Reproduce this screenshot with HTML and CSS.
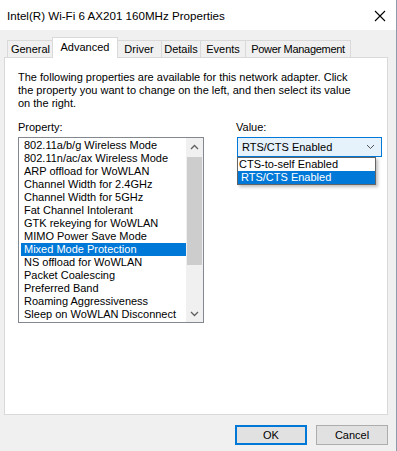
FILE: index.html
```html
<!doctype html>
<html lang="en">
<head>
    <meta charset="UTF-8">
    <title>Intel(R) Wi-Fi 6 AX201 160MHz Properties</title>
    <link rel="stylesheet" href="styles.css">
</head>
<body>
    <div class="window">
        <div class="titlebar">
            <span class="title">Intel(R) Wi-Fi 6 AX201 160MHz Properties</span>
            <svg class="close" width="12" height="12" viewBox="0 0 12 12">
                <path d="M1 1L11 11M11 1L1 11" stroke="#000" stroke-width="1.1" fill="none"/>
            </svg>
        </div>
        <div class="body">
            <div class="tabs">
                <div class="tab first">General</div>
                <div class="tab active">Advanced</div>
                <div class="tab driver">Driver</div>
                <div class="tab details">Details</div>
                <div class="tab events">Events</div>
                <div class="tab power">Power Management</div>
            </div>
            <div class="panel">
                <p class="desc">The following properties are available for this network adapter. Click<br>the property you want to change on the left, and then select its value<br>on the right.</p>
                <div class="columns">
                    <div class="prop-col">
                        <div class="label">Property:</div>
                        <div class="listbox">
                            <ul class="items">
                                <li>802.11a/b/g Wireless Mode</li>
                                <li>802.11n/ac/ax Wireless Mode</li>
                                <li>ARP offload for WoWLAN</li>
                                <li>Channel Width for 2.4GHz</li>
                                <li>Channel Width for 5GHz</li>
                                <li>Fat Channel Intolerant</li>
                                <li>GTK rekeying for WoWLAN</li>
                                <li>MIMO Power Save Mode</li>
                                <li class="selected">Mixed Mode Protection</li>
                                <li>NS offload for WoWLAN</li>
                                <li>Packet Coalescing</li>
                                <li>Preferred Band</li>
                                <li>Roaming Aggressiveness</li>
                                <li>Sleep on WoWLAN Disconnect</li>
                            </ul>
                            <div class="scrollbar">
                                <div class="arrow">
                                    <svg width="9" height="6" viewBox="0 0 9 6"><path d="M1 5L4.5 1.5L8 5" stroke="#606060" stroke-width="1.3" fill="none"/></svg>
                                </div>
                                <div class="track">
                                    <div class="thumb"></div>
                                </div>
                                <div class="arrow">
                                    <svg width="9" height="6" viewBox="0 0 9 6"><path d="M1 1L4.5 4.5L8 1" stroke="#606060" stroke-width="1.3" fill="none"/></svg>
                                </div>
                            </div>
                        </div>
                    </div>
                    <div class="value-col">
                        <div class="label">Value:</div>
                        <div class="combo">
                            <span>RTS/CTS Enabled</span>
                            <svg width="9" height="6" viewBox="0 0 9 6"><path d="M1 1L4.5 4.5L8 1" stroke="#555" stroke-width="1" fill="none"/></svg>
                            <ul class="dropdown">
                                <li>CTS-to-self Enabled</li>
                                <li class="selected">RTS/CTS Enabled</li>
                            </ul>
                        </div>
                    </div>
                </div>
            </div>
            <div class="buttons">
                <button class="btn default">OK</button>
                <button class="btn">Cancel</button>
            </div>
        </div>
    </div>
</body>
</html>
```

FILE: styles.css
```css
:root {
    --face: #f0f0f0;
    --tab-border: #d9d9d9;
    --accent: #0078d7;
    --text: #000;
}

body {
    margin: 0;
    font-family: 'Liberation Sans', Arial, sans-serif;
    font-size: 11px;
    color: var(--text);
    background: var(--face);
}

.window {
    width: 396px;
    height: 451px;
    border-right: 1px solid #8c9aab;
    background: var(--face);
}

.titlebar {
    height: 30px;
    background: #fff;
    display: flex;
    align-items: center;
    justify-content: space-between;
    padding: 0 10px 0 7px;
}

.title {
    font-size: 11.6px;
}

.close {
    margin-top: 1px;
}

.body {
    padding: 7px 0 0 4px;
}

/* tab strip */
.tabs {
    display: flex;
    align-items: flex-end;
    height: 20px;
    padding-left: 3px;
}

.tab {
    height: 16px;
    line-height: 17px;
    text-align: center;
    white-space: nowrap;
    border: 1px solid var(--tab-border);
    border-bottom: none;
    border-left: none;
    background: var(--face);
}

.tab.first {
    width: 45px;
    border-left: 1px solid var(--tab-border);
}

.tab.active {
    width: 64px;
    height: 20px;
    line-height: 18px;
    margin: 0 -1px 0 -2px;
    background: #fff;
    border-left: 1px solid var(--tab-border);
    position: relative;
    top: 1px;
    z-index: 1;
}

.tab.driver { width: 44px; }
.tab.details { width: 38px; }
.tab.events { width: 44px; }

.tab.power {
    width: 104px;
    letter-spacing: -0.3px;
}

/* page */
.panel {
    width: 382px;
    height: 356px;
    background: #fff;
    border: 1px solid var(--tab-border);
}

.desc {
    margin: 13px 0 0 13px;
    line-height: 13px;
}

.columns {
    display: flex;
    margin: 11px 0 0 13px;
}

.label {
    line-height: 13px;
    height: 16px;
}

.listbox {
    width: 184px;
    height: 184px;
    border: 1px solid #828790;
    display: flex;
}

.items {
    list-style: none;
    margin: 0;
    padding: 1px 0 0 2px;
    flex: 1;
}

.items li {
    height: 13px;
    line-height: 13px;
    padding-left: 3px;
    white-space: nowrap;
}

.selected {
    background: var(--accent);
    color: #fff;
}

.scrollbar {
    width: 17px;
    background: var(--face);
    display: flex;
    flex-direction: column;
}

.arrow {
    height: 17px;
    display: flex;
    align-items: center;
    justify-content: center;
}

.track {
    flex: 1;
    padding-top: 2px;
}

.thumb {
    width: 15px;
    margin: 0 auto;
    height: 108px;
    background: #cdcdcd;
}

.value-col {
    margin-left: 32px;
}

.combo {
    position: relative;
    width: 133px;
    height: 18px;
    border: 1px solid var(--accent);
    background: #e5f1fb;
    display: flex;
    align-items: center;
    justify-content: space-between;
    padding: 0 6px 0 4px;
    margin-left: 1px;
}

.dropdown {
    position: absolute;
    left: -1px;
    top: 19px;
    width: 137px;
    list-style: none;
    margin: 0;
    padding: 0;
    background: #fff;
    border: 1px solid #646464;
    box-shadow: 2px 2px 3px rgba(0, 0, 0, 0.25);
}

.dropdown li {
    height: 13px;
    line-height: 13px;
    padding-left: 1px;
    white-space: nowrap;
}

.dropdown li.selected {
    padding-left: 3px;
}

.buttons {
    display: flex;
    justify-content: flex-end;
    gap: 9px;
    width: 384px;
    margin-top: 10px;
}

.btn {
    width: 72px;
    height: 20px;
    font-family: inherit;
    font-size: 11px;
    background: #e1e1e1;
    border: 1px solid #adadad;
    padding: 0;
}

.btn.default {
    border: 2px solid var(--accent);
}
```
